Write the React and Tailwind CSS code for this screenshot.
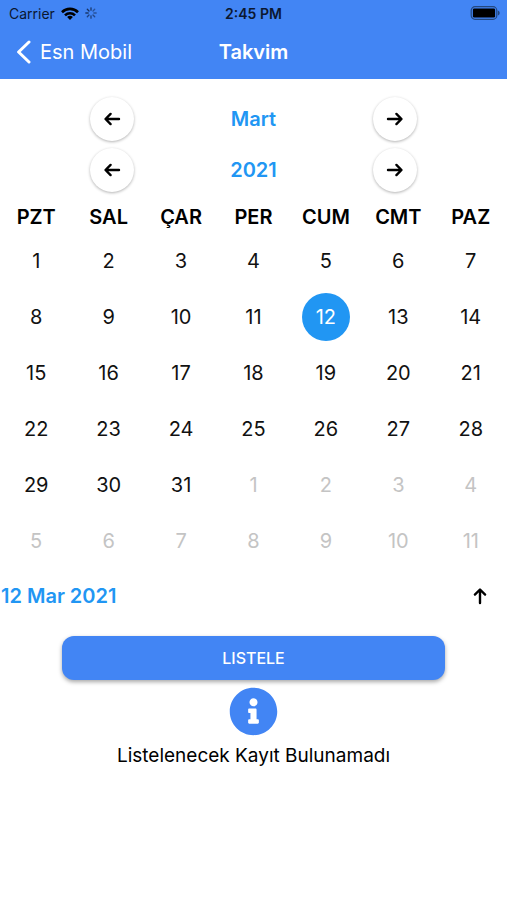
import { useState } from "react";
import clsx from "clsx";
import { FaInfoCircle } from "react-icons/fa";

const WEEKDAYS = ["PZT", "SAL", "ÇAR", "PER", "CUM", "CMT", "PAZ"];

// March 2021 starts on a Monday, the grid always shows six weeks
const DAYS_IN_MONTH = 31;
const WEEKS = Array.from({ length: 6 }, (_, week) =>
  Array.from({ length: 7 }, (_, day) => {
    const n = week * 7 + day + 1;
    return n > DAYS_IN_MONTH
      ? { label: n - DAYS_IN_MONTH, outside: true }
      : { label: n, outside: false };
  })
);

function Arrow({ className }) {
  return (
    <svg
      viewBox="0 0 18 18"
      fill="none"
      stroke="currentColor"
      strokeWidth="2.4"
      strokeLinecap="round"
      strokeLinejoin="round"
      className={clsx("size-[18px]", className)}
      aria-hidden="true"
    >
      <path d="M16 9H2.8M7.6 3.9 2.5 9l5.1 5.1" />
    </svg>
  );
}

function StatusBar() {
  return (
    <div className="grid h-[26px] grid-cols-[1fr_auto_1fr] items-center px-[7px] text-[14px] text-[#0b1730]">
      <div className="flex items-center gap-[6px] pl-0.5">
        <span>Carrier</span>
        <svg viewBox="0 0 18 13" className="h-[13px] w-[18px]" aria-hidden="true">
          <g fill="none" stroke="#000" strokeWidth="2.6">
            <path d="M1 5.2a11.4 11.4 0 0 1 16 0" />
            <path d="M4 8.3a7.1 7.1 0 0 1 10 0" />
          </g>
          <path d="M9 13 6.1 10.1a4.1 4.1 0 0 1 5.8 0z" fill="#000" />
        </svg>
        <svg
          viewBox="0 0 12 12"
          className="size-3"
          stroke="#16305f"
          strokeWidth="1.3"
          strokeLinecap="round"
          aria-hidden="true"
        >
          <path d="M6 .8v2.4" opacity=".9" />
          <path d="M9.7 2.3 8 4" opacity=".6" />
          <path d="M11.2 6H8.8" opacity=".6" />
          <path d="M9.7 9.7 8 8" opacity=".7" />
          <path d="M6 11.2V8.8" opacity=".8" />
          <path d="M2.3 9.7 4 8" opacity=".8" />
          <path d="M.8 6h2.4" opacity=".9" />
          <path d="M2.3 2.3 4 4" />
        </svg>
      </div>
      <span className="text-center font-semibold">2:45 PM</span>
      <svg
        viewBox="0 0 30 14"
        className="h-[14px] w-[30px] justify-self-end"
        aria-hidden="true"
      >
        <rect x="1.2" y="0.7" width="25.6" height="12.6" rx="3.8" fill="none" stroke="#24487f" strokeWidth="1.2" />
        <rect x="2.9" y="2.4" width="22.2" height="9.2" rx="1.4" fill="#000" />
        <path d="M27.9 4.6c2.4.8 2.4 4 0 4.8z" fill="#24487f" />
      </svg>
    </div>
  );
}

function Header() {
  return (
    <header className="bg-[#4285f4] pb-px">
      <StatusBar />
      <div className="grid h-[52px] grid-cols-[1fr_auto_1fr] items-center px-4 text-white">
        <a href="#home" className="flex items-center gap-[9px] text-[20px]">
          <svg
            viewBox="0 0 15 24"
            className="h-6 w-[15px]"
            fill="none"
            stroke="currentColor"
            strokeWidth="3"
            strokeLinecap="round"
            strokeLinejoin="round"
            aria-hidden="true"
          >
            <path d="M13 2 2.6 12 13 22" />
          </svg>
          Esn Mobil
        </a>
        <h1 className="text-[20px] font-semibold">Takvim</h1>
      </div>
    </header>
  );
}

function Stepper({ value, prevLabel, nextLabel }) {
  const button =
    "flex size-11 items-center justify-center rounded-full bg-white text-black shadow-[0_1px_3px_rgba(0,0,0,0.3)]";

  return (
    <div className="flex h-[51px] items-center justify-between px-[90px]">
      <button type="button" aria-label={prevLabel} className={button}>
        <Arrow />
      </button>
      <span className="text-[20px] font-semibold text-[#2196f3]">{value}</span>
      <button type="button" aria-label={nextLabel} className={button}>
        <Arrow className="rotate-180" />
      </button>
    </div>
  );
}

function Calendar({ selected, onSelect }) {
  return (
    <table className="w-full table-fixed border-collapse">
      <thead>
        <tr>
          {WEEKDAYS.map((day) => (
            <th key={day} scope="col" className="p-0 text-[20px] leading-[31px] font-semibold">
              {day}
            </th>
          ))}
        </tr>
      </thead>
      <tbody>
        {WEEKS.map((week, i) => (
          <tr key={i} className="h-14">
            {week.map(({ label, outside }) => {
              const active = !outside && label === selected;
              return (
                <td key={label} className="p-0">
                  <button
                    type="button"
                    disabled={outside}
                    onClick={() => onSelect(label)}
                    className={clsx(
                      "mx-auto flex size-12 items-center justify-center rounded-full text-[20px]",
                      active && "bg-[#2196f3] text-white",
                      outside && "text-[#c4c4c4]",
                      !active && !outside && "text-[#111111]"
                    )}
                  >
                    {label}
                  </button>
                </td>
              );
            })}
          </tr>
        ))}
      </tbody>
    </table>
  );
}

export default function App() {
  const [selected, setSelected] = useState(12);

  return (
    <div className="min-h-screen bg-white font-['Inter',sans-serif] text-black">
      <Header />

      <main className="pt-[14px]">
        <Stepper value="Mart" prevLabel="Önceki ay" nextLabel="Sonraki ay" />
        <Stepper value="2021" prevLabel="Önceki yıl" nextLabel="Sonraki yıl" />

        <div className="pt-[7px]">
          <Calendar selected={selected} onSelect={setSelected} />
        </div>

        <div className="flex h-[54px] items-center justify-between pr-[18px] pl-px">
          <span className="text-[20px] font-semibold text-[#2196f3]">
            {selected} Mar 2021
          </span>
          <button type="button" aria-label="Takvimi kapat">
            <Arrow className="rotate-90" />
          </button>
        </div>

        <div className="flex flex-col items-center px-[62px] pt-[13px]">
          <button
            type="button"
            className="h-11 w-full rounded-xl bg-[#4285f4] text-[16px] font-medium text-white shadow-[0_2px_4px_rgba(0,0,0,0.35)]"
          >
            LISTELE
          </button>
          <FaInfoCircle className="mt-[7px] size-[49px] text-[#4285f4]" aria-hidden="true" />
          <p className="mt-1 text-center text-[19px] leading-8">
            Listelenecek Kayıt Bulunamadı
          </p>
        </div>
      </main>
    </div>
  );
}
